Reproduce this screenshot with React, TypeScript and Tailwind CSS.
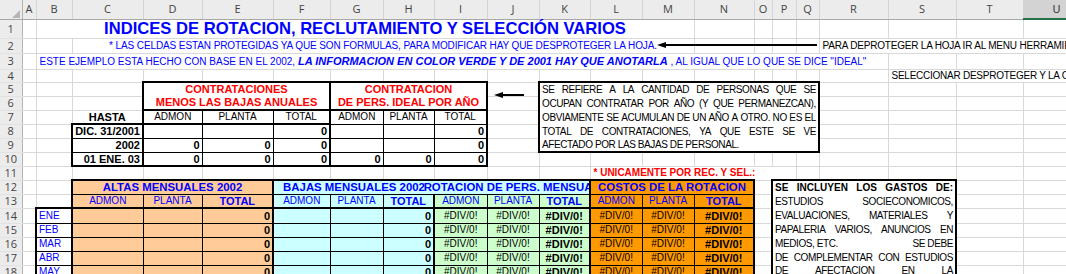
import React from 'react';

// celdas sin formato: solo la cuadricula gris
const g = 'border-r border-b border-[#d9d9d9] p-0';
// celdas de tabla con borde negro fino
const k = 'border border-black p-0';
const num = 'text-right pr-[2px] font-bold text-[11px]';
const peach = 'bg-[#ffcc99]';
const cyan = 'bg-[#ccffff]';
const green = 'bg-[#ccffcc]';
const orange = 'bg-[#ff9900]';
const blue = 'text-[#0000ff]';

const letters = ['A', 'B', 'C', 'D', 'E', 'F', 'G', 'H', 'I', 'J', 'K', 'L', 'M', 'N', 'O', 'P', 'Q', 'R', 'S', 'T'];
const months = ['ENE', 'FEB', 'MAR', 'ABR', 'MAY'];

function Free({ n = 1 }: { n?: number }) {
  return (
    <>
      {Array.from({ length: n }, (_, i) => (
        <td key={i} className={g} />
      ))}
    </>
  );
}

function Num({ n }: { n: number }) {
  return (
    <td className="border-r border-b border-r-[#b3b3b3] border-b-[#e2e2e2] bg-[#ececec] p-0 text-center font-['Open_Sans',sans-serif] text-[11px] leading-[12px] text-[#444]">
      {n}
    </td>
  );
}

function Just({ words, last, bold }: { words: string[]; last?: boolean; bold?: boolean }) {
  return (
    <div
      className={`flex items-center justify-between whitespace-nowrap leading-[12px] ${last ? 'h-[12px]' : 'h-[14px]'} ${
        bold ? 'font-bold tracking-normal' : ''
      }`}
    >
      {words.map((w, i) => (
        <span key={i}>{w}</span>
      ))}
    </div>
  );
}

function Arrow({ className, w }: { className: string; w: number }) {
  return (
    <svg className={`absolute ${className}`} width={w} height="8" viewBox={`0 0 ${w} 8`}>
      <line x1="6" y1="4" x2={w} y2="4" stroke="black" strokeWidth="2" />
      <polygon points="0,4 9,1 9,7" fill="black" />
    </svg>
  );
}

export default function App() {
  return (
    <div className="relative h-[274px] w-[1066px] overflow-hidden bg-white font-['Liberation_Sans',Arial,sans-serif] text-[10px] leading-[12px] text-black">
      <table className="w-[1090px] table-fixed border-collapse">
        <colgroup>
          <col className="w-[22px]" />
          <col className="w-[14px]" />
          <col className="w-[36px]" />
          <col className="w-[71px]" />
          <col className="w-[59px]" />
          <col className="w-[71px]" />
          <col className="w-[57px]" />
          <col className="w-[53px]" />
          <col className="w-[51px]" />
          <col className="w-[53px]" />
          <col className="w-[52px]" />
          <col className="w-[51px]" />
          <col className="w-[52px]" />
          <col className="w-[52px]" />
          <col className="w-[60px]" />
          <col className="w-[18px]" />
          <col className="w-[24px]" />
          <col className="w-[23px]" />
          <col className="w-[69px]" />
          <col className="w-[68px]" />
          <col className="w-[67px]" />
          <col className="w-[67px]" />
        </colgroup>
        <tbody>
          {/* encabezados de columna */}
          <tr className="h-[19px]">
            <td className="border-r border-b border-r-[#b3b3b3] border-b-[#a8a8a8] bg-[#ececec] p-0 align-bottom">
              <svg width="22" height="18" viewBox="0 0 22 18" className="block">
                <polygon points="20,9 20,17 12,17" fill="#b5b5b5" />
              </svg>
            </td>
            {letters.map((l) => (
              <td
                key={l}
                className="border-r border-b border-r-[#d4d4d4] border-b-[#a8a8a8] bg-[#ececec] p-0 text-center font-['Open_Sans',sans-serif] text-[11px] text-[#444]"
              >
                {l}
              </td>
            ))}
            <td className="border-r border-b-2 border-r-[#d4d4d4] border-b-[#217346] bg-[#d3d3d3] p-0 text-center font-['Open_Sans',sans-serif] text-[11px] text-[#222]">
              U
            </td>
          </tr>

          <tr className="h-[19px]">
            <Num n={1} />
            <Free />
            <td colSpan={12} className={`${g} whitespace-nowrap text-center text-[16.6px] font-bold leading-[18px] ${blue}`}>
              INDICES DE ROTACION, RECLUTAMIENTO Y SELECCIÓN VARIOS
            </td>
            <Free n={8} />
          </tr>

          <tr className="h-[15px]">
            <Num n={2} />
            <Free n={2} />
            <td colSpan={11} className={`${g} whitespace-nowrap text-center tracking-[-0.1px] ${blue}`}>
              * LAS CELDAS ESTAN PROTEGIDAS YA QUE SON FORMULAS, PARA MODIFICAR HAY QUE DESPROTEGER LA HOJA.
            </td>
            <Free n={4} />
            <td colSpan={4} className={`${g} whitespace-nowrap pl-[3px] tracking-[-0.2px]`}>
              PARA DEPROTEGER LA HOJA IR AL MENU HERRAMIENTAS
            </td>
          </tr>

          <tr className="h-[16px]">
            <Num n={3} />
            <Free />
            <td colSpan={17} className={`${g} whitespace-nowrap pl-[3px] ${blue}`}>
              ESTE EJEMPLO ESTA HECHO CON BASE EN EL 2002,{' '}
              <span className="text-[11px] font-bold italic">LA INFORMACION EN COLOR VERDE Y DE 2001 HAY QUE ANOTARLA</span> , AL
              IGUAL QUE LO QUE SE DICE "IDEAL"
            </td>
            <Free n={3} />
          </tr>

          <tr className="h-[13px]">
            <Num n={4} />
            <Free n={18} />
            <td colSpan={3} className={`${g} whitespace-nowrap pl-[3px] tracking-[-0.25px]`}>
              SELECCIONAR DESPROTEGER Y LA CONTRASEÑA
            </td>
          </tr>

          <tr className="h-[14px]">
            <Num n={5} />
            <Free n={3} />
            <td colSpan={3} rowSpan={2} className="border-2 border-black p-0 text-center text-[11px] font-bold leading-[13px] text-[#ff0000]">
              CONTRATACIONES
              <br />
              MENOS LAS BAJAS ANUALES
            </td>
            <td colSpan={3} rowSpan={2} className="border-2 border-black p-0 text-center text-[11px] font-bold leading-[13px] text-[#ff0000]">
              CONTRATACION
              <br />
              DE PERS. IDEAL POR AÑO
            </td>
            <Free />
            <td colSpan={7} rowSpan={5} className="border-2 border-black p-0 px-[2px] align-top tracking-[-0.4px]">
              <Just words={['SE', 'REFIERE', 'A', 'LA', 'CANTIDAD', 'DE', 'PERSONAS', 'QUE', 'SE']} />
              <Just words={['OCUPAN', 'CONTRATAR', 'POR', 'AÑO', '(Y', 'QUE', 'PERMANEZCAN),']} />
              <Just words={['OBVIAMENTE', 'SE', 'ACUMULAN', 'DE', 'UN', 'AÑO', 'A', 'OTRO.', 'NO', 'ES', 'EL']} />
              <Just words={['TOTAL', 'DE', 'CONTRATACIONES,', 'YA', 'QUE', 'ESTE', 'SE', 'VE']} />
              <div className="h-[12px] whitespace-nowrap">AFECTADO POR LAS BAJAS DE PERSONAL.</div>
            </td>
            <Free n={4} />
          </tr>

          <tr className="h-[14px]">
            <Num n={6} />
            <Free n={8} />
          </tr>

          <tr className="h-[14px]">
            <Num n={7} />
            <Free n={2} />
            <td className="border-r-2 border-b-2 border-black p-0 text-center text-[11px] font-bold">HASTA</td>
            <td className={`${k} border-l-2 border-b-2 text-center`}>ADMON</td>
            <td className={`${k} border-b-2 text-center`}>PLANTA</td>
            <td className={`${k} border-r-2 border-b-2 text-center`}>TOTAL</td>
            <td className={`${k} text-center`}>ADMON</td>
            <td className={`${k} text-center`}>PLANTA</td>
            <td className={`${k} border-r-2 text-center`}>TOTAL</td>
            <Free n={5} />
          </tr>

          <tr className="h-[14px]">
            <Num n={8} />
            <Free n={2} />
            <td className={`${k} border-l-2 border-r-2 whitespace-nowrap ${num}`}>DIC. 31/2001</td>
            <td className={k} />
            <td className={k} />
            <td className={`${k} border-r-2 ${num}`}>0</td>
            <td className={k} />
            <td className={k} />
            <td className={`${k} border-r-2 ${num}`}>0</td>
            <Free n={5} />
          </tr>

          <tr className="h-[14px]">
            <Num n={9} />
            <Free n={2} />
            <td className={`${k} border-l-2 border-r-2 ${num}`}>2002</td>
            <td className={`${k} ${num}`}>0</td>
            <td className={`${k} ${num}`}>0</td>
            <td className={`${k} border-r-2 ${num}`}>0</td>
            <td className={k} />
            <td className={k} />
            <td className={`${k} border-r-2 ${num}`}>0</td>
            <Free n={5} />
          </tr>

          <tr className="h-[14px]">
            <Num n={10} />
            <Free n={2} />
            <td className={`${k} border-l-2 border-r-2 border-b-2 whitespace-nowrap ${num}`}>01 ENE. 03</td>
            <td className={`${k} border-b-2 ${num}`}>0</td>
            <td className={`${k} border-b-2 ${num}`}>0</td>
            <td className={`${k} border-r-2 border-b-2 ${num}`}>0</td>
            <td className={`${k} border-b-2 ${num}`}>0</td>
            <td className={`${k} border-b-2 ${num}`}>0</td>
            <td className={`${k} border-r-2 border-b-2 ${num}`}>0</td>
            <Free n={12} />
          </tr>

          <tr className="h-[14px]">
            <Num n={11} />
            <Free n={11} />
            <td colSpan={5} className={`${g} whitespace-nowrap pl-[3px] text-[10px] font-bold text-[#ff0000]`}>
              * UNICAMENTE POR REC. Y SEL.:
            </td>
            <Free n={5} />
          </tr>

          <tr className="h-[14px]">
            <Num n={12} />
            <Free n={2} />
            <td colSpan={3} className={`border-2 border-b border-black p-0 ${peach} text-center text-[11.4px] font-bold whitespace-nowrap ${blue}`}>
              ALTAS MENSUALES 2002
            </td>
            <td colSpan={3} className={`border-t-2 border-b border-black p-0 ${cyan} text-center text-[11.4px] font-bold whitespace-nowrap ${blue}`}>
              BAJAS MENSUALES 2002
            </td>
            <td colSpan={3} className={`border-t-2 border-b border-black p-0 ${cyan} text-[11.4px] font-bold ${blue}`}>
              <div className="flex justify-center whitespace-nowrap [clip-path:inset(-4px_0_-4px_-30px)]">
                <span className="shrink-0">ROTACION DE PERS. MENSUAL</span>
              </div>
            </td>
            <td colSpan={3} className={`border-2 border-b border-black p-0 ${orange} text-center text-[11.4px] font-bold whitespace-nowrap ${blue}`}>
              COSTOS DE LA ROTACION
            </td>
            <Free />
            <td colSpan={4} rowSpan={7} className="border-2 border-black p-0 px-[2px] align-top tracking-[-0.4px]">
              <Just words={['SE', 'INCLUYEN', 'LOS', 'GASTOS', 'DE:']} bold />
              <Just words={['ESTUDIOS', 'SOCIECONOMICOS,']} />
              <Just words={['EVALUACIONES,', 'MATERIALES', 'Y']} />
              <Just words={['PAPALERIA', 'VARIOS,', 'ANUNCIOS', 'EN']} />
              <Just words={['MEDIOS, ETC.', 'SE DEBE']} />
              <Just words={['DE', 'COMPLEMENTAR', 'CON', 'ESTUDIOS']} />
              <Just words={['DE', 'AFECTACION', 'EN', 'LA']} last />
            </td>
            <Free n={2} />
          </tr>

          <tr className="h-[14px]">
            <Num n={13} />
            <Free n={2} />
            <td className={`${k} ${peach} border-l-2 border-b-2 text-center ${blue}`}>ADMON</td>
            <td className={`${k} ${peach} border-b-2 text-center ${blue}`}>PLANTA</td>
            <td className={`${k} ${peach} border-r-2 border-b-2 text-center text-[11px] font-bold ${blue}`}>TOTAL</td>
            <td className={`${k} ${cyan} border-b-2 text-center ${blue}`}>ADMON</td>
            <td className={`${k} ${cyan} border-b-2 text-center ${blue}`}>PLANTA</td>
            <td className={`${k} ${cyan} border-r-2 border-b-2 text-center text-[11px] font-bold ${blue}`}>TOTAL</td>
            <td className={`${k} ${green} border-b-2 text-center ${blue}`}>ADMON</td>
            <td className={`${k} ${green} border-b-2 text-center ${blue}`}>PLANTA</td>
            <td className={`${k} ${green} border-r-2 border-b-2 text-center text-[11px] font-bold ${blue}`}>TOTAL</td>
            <td className={`${k} ${orange} border-b-2 text-center ${blue}`}>ADMON</td>
            <td className={`${k} ${orange} border-b-2 text-center ${blue}`}>PLANTA</td>
            <td className={`${k} ${orange} border-r-2 border-b-2 text-center text-[11px] font-bold ${blue}`}>TOTAL</td>
            <Free n={3} />
          </tr>

          {months.map((m, i) => (
            <tr key={m} className={i === 0 ? 'h-[15px]' : 'h-[14px]'}>
              <Num n={14 + i} />
              <Free />
              <td className={`${k} border-l-2 border-r-2 ${i === 0 ? 'border-t-2' : ''} pl-[2px] ${blue}`}>{m}</td>
              <td className={`${k} ${peach}`} />
              <td className={`${k} ${peach}`} />
              <td className={`${k} ${peach} border-r-2 ${num}`}>0</td>
              <td className={`${k} ${cyan}`} />
              <td className={`${k} ${cyan}`} />
              <td className={`${k} ${cyan} border-r-2 ${num}`}>0</td>
              <td className={`${k} ${green} text-center`}>#DIV/0!</td>
              <td className={`${k} ${green} text-center`}>#DIV/0!</td>
              <td className={`${k} ${green} border-r-2 text-center text-[11px] font-bold`}>#DIV/0!</td>
              <td className={`${k} ${orange} text-center`}>#DIV/0!</td>
              <td className={`${k} ${orange} text-center`}>#DIV/0!</td>
              <td className={`${k} ${orange} border-r-2 text-center text-[11px] font-bold`}>#DIV/0!</td>
              <Free n={3} />
            </tr>
          ))}
        </tbody>
      </table>

      {/* flechas dibujadas sobre la hoja */}
      <Arrow className="left-[657px] top-[41px]" w={160} />
      <Arrow className="left-[494px] top-[91px]" w={30} />
    </div>
  );
}
